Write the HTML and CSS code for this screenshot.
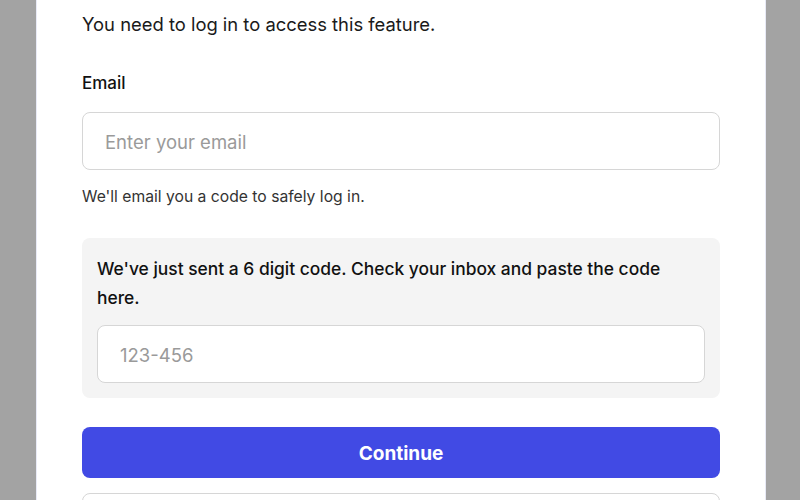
FILE: index.html
```html
<!DOCTYPE html>
<html>
<head>
<meta charset="utf-8">
<link rel="stylesheet" href="styles.css">
</head>
<body>
<div class="modal">
  <p class="intro">You need to log in to access this feature.</p>
  <label class="label">Email</label>
  <div class="input"><span class="placeholder">Enter your email</span></div>
  <p class="hint">We'll email you a code to safely log in.</p>
  <div class="code-box">
    <p class="code-text">We've just sent a 6 digit code. Check your inbox and paste the code here.</p>
    <div class="input"><span class="placeholder">123-456</span></div>
  </div>
  <button class="btn-primary">Continue</button>
  <button class="btn-secondary"></button>
</div>
</body>
</html>
```

FILE: styles.css
```css
html, body {
  margin: 0;
  padding: 0;
  height: 100%;
  overflow: hidden;
}
body {
  background: #a3a3a3;
  font-family: Inter, "Noto Sans", sans-serif;
}
.modal {
  margin-left: 36px;
  width: 730px;
  height: 100%;
  overflow: hidden;
  background: #ffffff;
  box-sizing: border-box;
  padding: 10px 45px 0 45px;
  border-left: 1px solid #e8eaf6;
  border-right: 1px solid #e8eaf6;
  display: flex;
  flex-direction: column;
}
.modal > * {
  flex-shrink: 0;
}
.intro {
  margin: 0;
  font-size: 18.4px;
  line-height: 28px;
  color: #1a1a1a;
}
.label {
  margin-top: 33px;
  font-size: 17px;
  line-height: 24px;
  font-weight: 500;
  color: #111;
}
.input {
  margin-top: 17px;
  height: 58px;
  box-sizing: border-box;
  border: 1px solid #d6d6d6;
  border-radius: 8px;
  background: #fff;
  display: flex;
  align-items: center;
  padding: 2px 22px 0 22px;
}
.placeholder {
  font-size: 18.5px;
  color: #9a9a9a;
}
.hint {
  margin: 17px 0 0 0;
  font-size: 15.7px;
  line-height: 20px;
  color: #333;
}
.code-box {
  margin-top: 31px;
  background: #f4f4f4;
  border-radius: 8px;
  padding: 16px 15px 15px 15px;
}
.code-text {
  margin: 0;
  font-size: 17.4px;
  line-height: 29px;
  font-weight: 500;
  color: #111;
  padding-right: 30px;
}
.code-box .input {
  margin-top: 13px;
}
.btn-primary {
  margin-top: 29px;
  height: 51px;
  padding-top: 2px;
  border: none;
  border-radius: 8px;
  background: #414ae4;
  color: #fff;
  font-family: inherit;
  font-size: 19px;
  font-weight: 700;
}
.btn-secondary {
  margin-top: 15px;
  height: 51px;
  border: 1px solid #d6d6d6;
  border-radius: 8px;
  background: #fff;
}
```
